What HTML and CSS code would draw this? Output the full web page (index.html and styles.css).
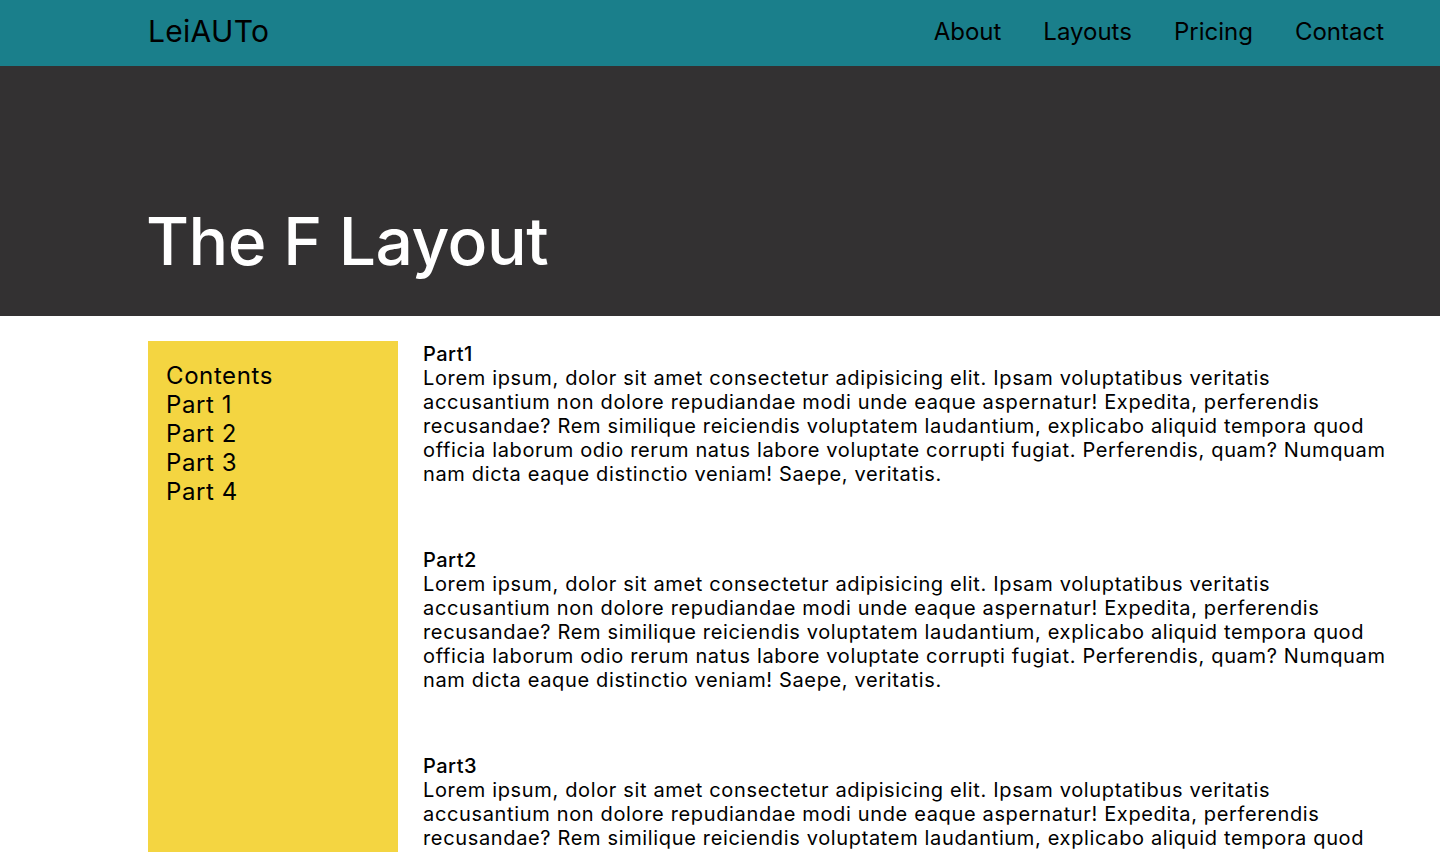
FILE: index.html
```html
<!DOCTYPE html>
<html lang="en">
<head>
<meta charset="utf-8">
<title>The F Layout</title>
<link rel="stylesheet" href="styles.css">
</head>
<body>
<header class="topbar">
  <div class="logo">LeiAUTo</div>
  <nav class="nav">
    <a href="#">About</a>
    <a href="#">Layouts</a>
    <a href="#">Pricing</a>
    <a href="#">Contact</a>
  </nav>
</header>
<section class="hero">
  <h1 class="hero-title">The F Layout</h1>
</section>
<main class="layout">
  <aside class="sidebar">
    <ul class="toc">
      <li>Contents</li>
      <li>Part 1</li>
      <li>Part 2</li>
      <li>Part 3</li>
      <li>Part 4</li>
    </ul>
  </aside>
  <div class="content">
    <article class="part">
      <h2 class="part-title">Part1</h2>
      <p class="part-text">Lorem ipsum, dolor sit amet consectetur adipisicing elit. Ipsam voluptatibus veritatis accusantium non dolore repudiandae modi unde eaque aspernatur! Expedita, perferendis recusandae? Rem similique reiciendis voluptatem laudantium, explicabo aliquid tempora quod officia laborum odio rerum natus labore voluptate corrupti fugiat. Perferendis, quam? Numquam nam dicta eaque distinctio veniam! Saepe, veritatis.</p>
    </article>
    <article class="part">
      <h2 class="part-title">Part2</h2>
      <p class="part-text">Lorem ipsum, dolor sit amet consectetur adipisicing elit. Ipsam voluptatibus veritatis accusantium non dolore repudiandae modi unde eaque aspernatur! Expedita, perferendis recusandae? Rem similique reiciendis voluptatem laudantium, explicabo aliquid tempora quod officia laborum odio rerum natus labore voluptate corrupti fugiat. Perferendis, quam? Numquam nam dicta eaque distinctio veniam! Saepe, veritatis.</p>
    </article>
    <article class="part">
      <h2 class="part-title">Part3</h2>
      <p class="part-text">Lorem ipsum, dolor sit amet consectetur adipisicing elit. Ipsam voluptatibus veritatis accusantium non dolore repudiandae modi unde eaque aspernatur! Expedita, perferendis recusandae? Rem similique reiciendis voluptatem laudantium, explicabo aliquid tempora quod officia laborum odio rerum natus labore voluptate corrupti fugiat. Perferendis, quam? Numquam nam dicta eaque distinctio veniam! Saepe, veritatis.</p>
    </article>
    <article class="part">
      <h2 class="part-title">Part4</h2>
      <p class="part-text">Lorem ipsum, dolor sit amet consectetur adipisicing elit. Ipsam voluptatibus veritatis accusantium non dolore repudiandae modi unde eaque aspernatur! Expedita, perferendis recusandae? Rem similique reiciendis voluptatem laudantium, explicabo aliquid tempora quod officia laborum odio rerum natus labore voluptate corrupti fugiat. Perferendis, quam? Numquam nam dicta eaque distinctio veniam! Saepe, veritatis.</p>
    </article>
  </div>
</main>
</body>
</html>
```

FILE: styles.css
```css
* {
  box-sizing: border-box;
}

body {
  margin: 0;
  font-family: Inter, "DejaVu Sans", sans-serif;
  color: #000;
  background: #fff;
}

.topbar {
  height: 66px;
  background: #1a7f8b;
  display: flex;
  align-items: center;
  justify-content: space-between;
  padding: 0 56px 4px 148px;
}

.logo {
  font-size: 30px;
  font-weight: 400;
  letter-spacing: 0.3px;
}

.nav {
  display: flex;
  gap: 42px;
}

.nav a {
  color: #000;
  text-decoration: none;
  font-size: 24px;
  letter-spacing: 0;
}

.hero {
  height: 250px;
  background: #333132;
  display: flex;
  align-items: flex-end;
  padding: 0 0 35px 146px;
}

.hero-title {
  margin: 0;
  color: #fff;
  font-size: 66px;
  font-weight: 500;
  letter-spacing: -0.5px;
  line-height: 1.2;
}

.layout {
  display: flex;
  gap: 25px;
  padding: 25px 40px 0 148px;
}

.sidebar {
  flex: 0 0 250px;
  background: #f4d541;
  padding: 20px 18px 19px;
  min-height: 700px;
}

.toc {
  list-style: none;
  margin: 0;
  padding: 0;
  font-size: 24px;
  letter-spacing: 0.6px;
  line-height: 29px;
}

.content {
  flex: 1;
  padding-top: 1px;
}

.part {
  margin-bottom: 62px;
}

.part-title {
  margin: 0;
  font-size: 20px;
  font-weight: 500;
  letter-spacing: 0.5px;
  line-height: 24px;
}

.part-text {
  margin: 0;
  font-size: 20px;
  letter-spacing: 0.65px;
  line-height: 24px;
}
```
